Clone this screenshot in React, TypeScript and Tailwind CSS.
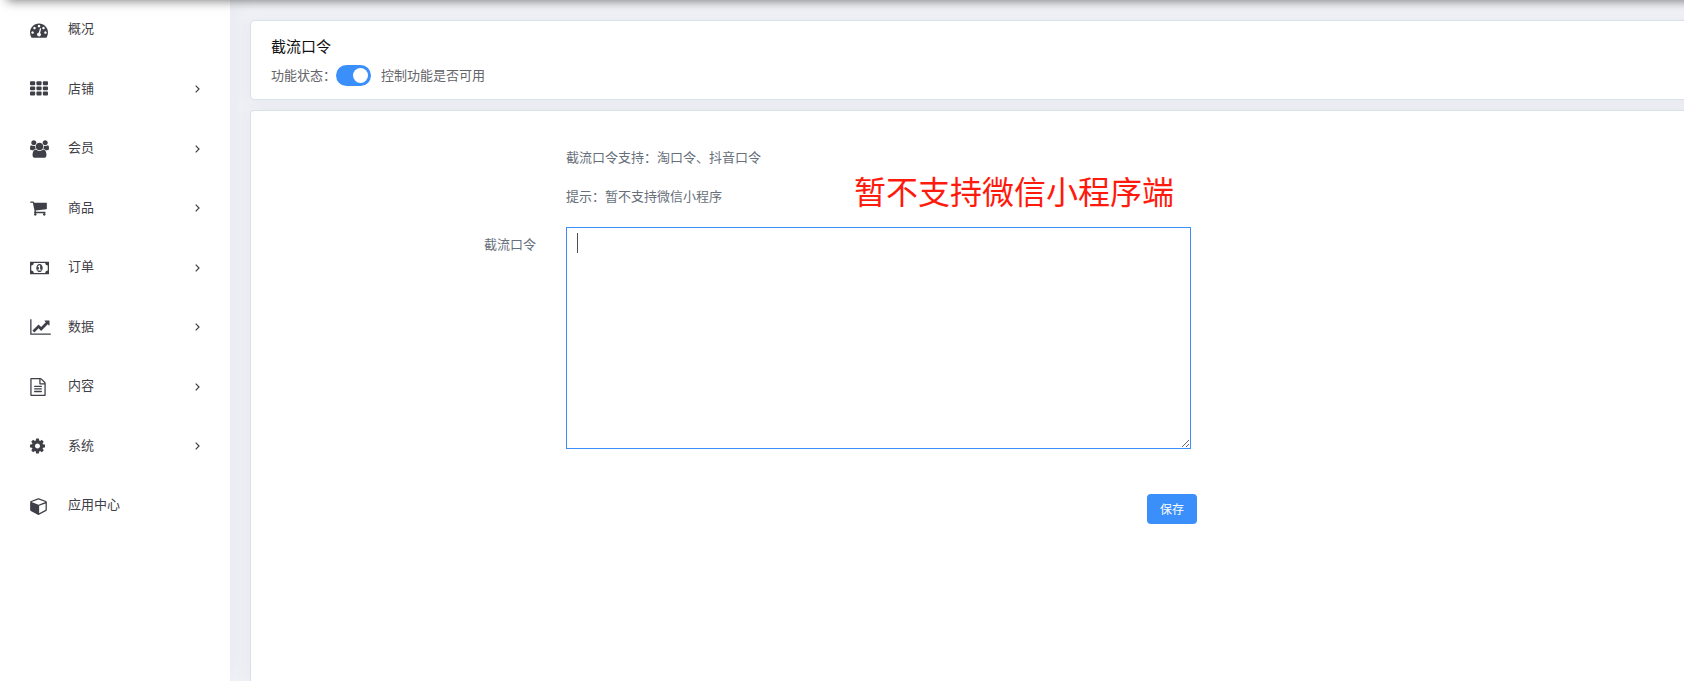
import { useState } from 'react';
import type { ReactNode } from 'react';

interface MenuItem {
  label: string;
  viewBox: string;
  width: string;
  icon: ReactNode;
  expandable?: boolean;
}

const menuItems: MenuItem[] = [
  {
    label: '概况',
    viewBox: '0 0 1792 1792',
    width: 'w-[18px]',
    icon: <path d="M384 1152q0-53-37.500-90.500t-90.500-37.500-90.500 37.500-37.500 90.500 37.500 90.500 90.500 37.500 90.500-37.500 37.500-90.500zm192-448q0-53-37.500-90.500t-90.500-37.500-90.500 37.500-37.500 90.500 37.500 90.500 90.500 37.500 90.500-37.500 37.500-90.500zm428 481l101-382q6-26-7.500-48.500t-38.500-29.500-48 6.500-30 39.500l-101 382q-60 5-107 43.500t-63 98.500q-20 77 20 146t117 89 146-20 89-117q16-60-6-117t-72-91zm660-33q0-53-37.500-90.500t-90.500-37.500-90.500 37.500-37.500 90.500 37.500 90.500 90.500 37.500 90.500-37.500 37.500-90.500zm-640-640q0-53-37.500-90.500t-90.500-37.500-90.500 37.500-37.500 90.500 37.500 90.500 90.500 37.500 90.500-37.500 37.500-90.500zm448 192q0-53-37.500-90.500t-90.500-37.500-90.500 37.500-37.500 90.500 37.500 90.500 90.500 37.500 90.500-37.500 37.500-90.500zm320 448q0 261-141 483-19 29-54 29h-1402q-35 0-54-29-141-221-141-483 0-182 71-348t191-286 286-191 348-71 348 71 286 191 191 286 71 348z" />,
  },
  {
    label: '店铺',
    viewBox: '0 0 1792 1792',
    width: 'w-[18px]',
    expandable: true,
    icon: [128, 640, 1152].map(y =>
      [0, 640, 1280].map(x => <rect key={`${x}-${y}`} x={x} y={y} width="512" height="384" rx="96" />)
    ),
  },
  {
    label: '会员',
    viewBox: '0 0 1920 1792',
    width: 'w-[19px]',
    expandable: true,
    icon: <path d="M593 896q-162 5-265 128h-134q-82 0-138-40.500t-56-118.500q0-353 124-353 6 0 43.500 21t97.500 42.500 119 21.500q67 0 133-23-5 37-5 66 0 139 81 256zm1071 637q0 120-73 189.500t-194 69.500h-874q-121 0-194-69.500t-73-189.500q0-53 3.500-103.500t14-109 26.500-108.500 43-97.500 62-81 85.500-53.500 111.500-20q10 0 43 21.500t73 48 107 48 135 21.500 135-21.500 107-48 73-48 43-21.500q61 0 111.500 20t85.500 53.500 62 81 43 97.500 26.500 108.500 14 109 3.500 103.500zm-1024-1277q0 106-75 181t-181 75-181-75-75-181 75-181 181-75 181 75 75 181zm704 384q0 159-112.500 271.500t-271.500 112.500-271.500-112.500-112.500-271.500 112.500-271.500 271.500-112.500 271.500 112.500 112.500 271.500zm576 225q0 78-56 118.500t-138 40.500h-134q-103-123-265-128 81-117 81-256 0-29-5-66 66 23 133 23 59 0 119-21.500t97.500-42.500 43.500-21q124 0 124 353zm-128-609q0 106-75 181t-181 75-181-75-75-181 75-181 181-75 181 75 75 181z" />,
  },
  {
    label: '商品',
    viewBox: '64 0 1664 1792',
    width: 'w-[17px]',
    expandable: true,
    icon: <path d="M704 1536q0 52-38 90t-90 38-90-38-38-90 38-90 90-38 90 38 38 90zm896 0q0 52-38 90t-90 38-90-38-38-90 38-90 90-38 90 38 38 90zm128-1088v512q0 24-16.500 42.500t-40.500 21.500l-1044 122q13 60 13 70 0 16-24 64h920q26 0 45 19t19 45-19 45-45 19h-1024q-26 0-45-19t-19-45q0-11 8-31.500t16-36 21.500-40 15.500-29.500l-177-823h-204q-26 0-45-19t-19-45 19-45 45-19h256q16 0 28.500 6.500t19.500 15.500 13 24.500 8 26 5.500 29.500 4.500 26h1201q26 0 45 19t19 45z" />,
  },
  {
    label: '订单',
    viewBox: '0 0 1920 1792',
    width: 'w-[19px]',
    expandable: true,
    icon: <path d="M768 1152h384v-96h-128v-448h-114l-148 137 77 80q42-37 55-57h2v288h-128v96zm512-256q0 70-21 142t-59.500 134-101.500 101-138 39-138-39-101.500-101-59.500-134-21-142 21-142 59.500-134 101.500-101 138-39 138 39 101.500 101 59.500 134 21 142zm512 256v-512q-106 0-181-75t-75-181h-1152q0 106-75 181t-181 75v512q106 0 181 75t75 181h1152q0-106 75-181t181-75zm128-832v1152q0 26-19 45t-45 19h-1792q-26 0-45-19t-19-45v-1152q0-26 19-45t45-19h1792q26 0 45 19t19 45z" />,
  },
  {
    label: '数据',
    viewBox: '0 0 2048 1792',
    width: 'w-[21px]',
    expandable: true,
    icon: <path d="M2048 1536v128h-2048v-1536h128v1408h1920zm-128-1248v435q0 21-19.500 29.500t-35.500-7.500l-121-121-633 633q-10 10-23 10t-23-10l-233-233-416 416-192-192 585-585q10-10 23-10t23 10l233 233 464-464-121-121q-16-16-7.500-35.500t29.500-19.500h435q14 0 23 9t9 23z" />,
  },
  {
    label: '内容',
    viewBox: '128 0 1536 1792',
    width: 'w-4',
    expandable: true,
    icon: <path d="M1596 380q28 28 48 76t20 88v1152q0 40-28 68t-68 28h-1344q-40 0-68-28t-28-68v-1600q0-40 28-68t68-28h896q40 0 88 20t76 48zm-444-244v376h376q-10-29-22-41l-313-313q-12-12-41-22zm384 1528v-1024h-416q-40 0-68-28t-28-68v-416h-768v1536h1280zm-1024-864q0-14 9-23t23-9h704q14 0 23 9t9 23v64q0 14-9 23t-23 9h-704q-14 0-23-9t-9-23v-64zm736 224q14 0 23 9t9 23v64q0 14-9 23t-23 9h-704q-14 0-23-9t-9-23v-64q0-14 9-23t23-9h704zm0 256q14 0 23 9t9 23v64q0 14-9 23t-23 9h-704q-14 0-23-9t-9-23v-64q0-14 9-23t23-9h704z" />,
  },
  {
    label: '系统',
    viewBox: '128 0 1536 1792',
    width: 'w-[15px]',
    expandable: true,
    icon: <path d="M1152 896q0-106-75-181t-181-75-181 75-75 181 75 181 181 75 181-75 75-181zm512-109v222q0 12-8 23t-20 13l-185 28q-19 54-39 91 35 50 107 138 10 12 10 25t-9 23q-27 37-99 108t-94 71q-12 0-26-9l-138-108q-44 23-91 38-16 136-29 186-7 28-36 28h-222q-14 0-24.500-8.500t-11.500-21.500l-28-184q-49-16-90-37l-141 107q-10 9-25 9-14 0-25-11-126-114-165-168-7-10-7-23 0-12 8-23 15-21 51-66.500t54-70.500q-27-50-41-99l-183-27q-13-2-21-12.500t-8-23.500v-222q0-12 8-23t19-13l186-28q14-46 39-92-40-57-107-138-10-12-10-24 0-10 9-23 26-36 98.500-107.500t94.500-71.500q13 0 26 10l138 107q44-23 91-38 16-136 29-186 7-28 36-28h222q14 0 24.500 8.500t11.500 21.500l28 184q49 16 90 37l142-107q9-9 24-9 13 0 25 10 129 119 165 170 7 8 7 22 0 12-8 23-15 21-51 66.500t-54 70.500q26 50 41 98l183 28q13 2 21 12.500t8 23.500z" />,
  },
  {
    label: '应用中心',
    viewBox: '0 0 1664 1792',
    width: 'w-[17px]',
    icon: <path d="M896 1629l640-349v-636l-640 233v752zm-64-865l698-254-698-254-698 254zm832-252v768q0 35-18 65t-49 47l-704 384q-28 16-61 16t-61-16l-704-384q-31-17-49-47t-18-65v-768q0-40 23-73t61-47l704-256q22-8 44-8t44 8l704 256q38 14 61 47t23 73z" />,
  },
];

function Sidebar() {
  return (
    <nav className="relative w-[230px] shrink-0 bg-white shadow-[0_0_28px_0_rgba(60,63,80,0.08)]">
      <ul>
        {menuItems.map(item => (
          <li key={item.label}>
            <a href="#" className="flex items-center px-[30px] py-[18px] text-[13px] leading-normal text-[#3f4047]">
              <span className="w-[38px] shrink-0">
                <svg viewBox={item.viewBox} className={`h-[18px] ${item.width}`} fill="currentColor">
                  {item.icon}
                </svg>
              </span>
              <span className="grow pb-1">{item.label}</span>
              {item.expandable && (
                <svg viewBox="0 0 5 8" className="h-2 w-[5px]" fill="none" stroke="currentColor" strokeWidth="1.2">
                  <path d="M0.700 0.700L4 4L0.700 7.300" />
                </svg>
              )}
            </a>
          </li>
        ))}
      </ul>
    </nav>
  );
}

export default function App() {
  const [enabled, setEnabled] = useState(true);
  const [command, setCommand] = useState('');

  return (
    <div className="relative flex min-h-screen overflow-hidden bg-[#f2f3f8] font-['Noto_Sans_CJK_SC',sans-serif]">
      {/* header sits above the scrolled view, only its shadow shows */}
      <div className="absolute -right-5 bottom-full left-2 z-10 h-16 shadow-[0_0_10px_1px_rgba(0,0,0,0.5)]" />

      <Sidebar />

      <main className="-mr-5 flex grow flex-col gap-2.5 pl-5 pt-5">
        <section className="rounded border border-[#d9e2e7] bg-white px-5 py-[13px] shadow-[0_1px_15px_1px_rgba(69,72,78,0.06)]">
          <h1 className="text-[15px] leading-6 text-[#111111]">截流口令</h1>
          <div className="mt-[7px] flex items-center text-[13px] leading-[19px] text-[#646469]">
            <span className="pb-0.5">功能状态：</span>
            <label className="flex items-center gap-2.5">
              <span className="relative flex">
                <input
                  type="checkbox"
                  checked={enabled}
                  onChange={e => setEnabled(e.target.checked)}
                  className="peer h-[21px] w-[35px] appearance-none rounded-full bg-gray-300 checked:bg-[#3a8ffb]"
                />
                <span className="pointer-events-none absolute left-[3px] top-[3px] size-[15px] rounded-full bg-white peer-checked:left-[17px]" />
              </span>
              <span className="pb-0.5">控制功能是否可用</span>
            </label>
          </div>
        </section>

        <section className="grow rounded-t border border-b-0 border-[#d9e2e7] bg-white shadow-[0_1px_15px_1px_rgba(69,72,78,0.06)]">
          <form className="w-[946px] pt-9 text-[13px] leading-5 text-[#676f7a]" onSubmit={e => e.preventDefault()}>
            <div className="relative pl-[315px]">
              <p>截流口令支持：淘口令、抖音口令</p>
              <p className="mt-[19px]">提示：暂不支持微信小程序</p>
              <p className="absolute left-[603px] top-[19px] text-[32px] leading-[48px] text-[#ff1a0e]">暂不支持微信小程序端</p>
            </div>
            <div className="mt-[21px] flex">
              <label htmlFor="command" className="w-[315px] shrink-0 pr-[30px] pt-[7px] text-right">
                截流口令
              </label>
              <div className="relative flex w-[625px]">
                <textarea
                  id="command"
                  value={command}
                  onChange={e => setCommand(e.target.value)}
                  className="h-[222px] w-full border border-[#3a8ffb] px-2.5 py-1.5 outline-none"
                />
                {command === '' && (
                  <span className="pointer-events-none absolute left-[11px] top-1.5 h-5 w-px bg-[#495057]" />
                )}
              </div>
            </div>
            <div className="mt-[45px] flex justify-end">
              <button type="submit" className="rounded bg-[#3a8ffb] px-[13px] py-1.5 text-xs leading-[18px] text-white">
                保存
              </button>
            </div>
          </form>
        </section>
      </main>
    </div>
  );
}
